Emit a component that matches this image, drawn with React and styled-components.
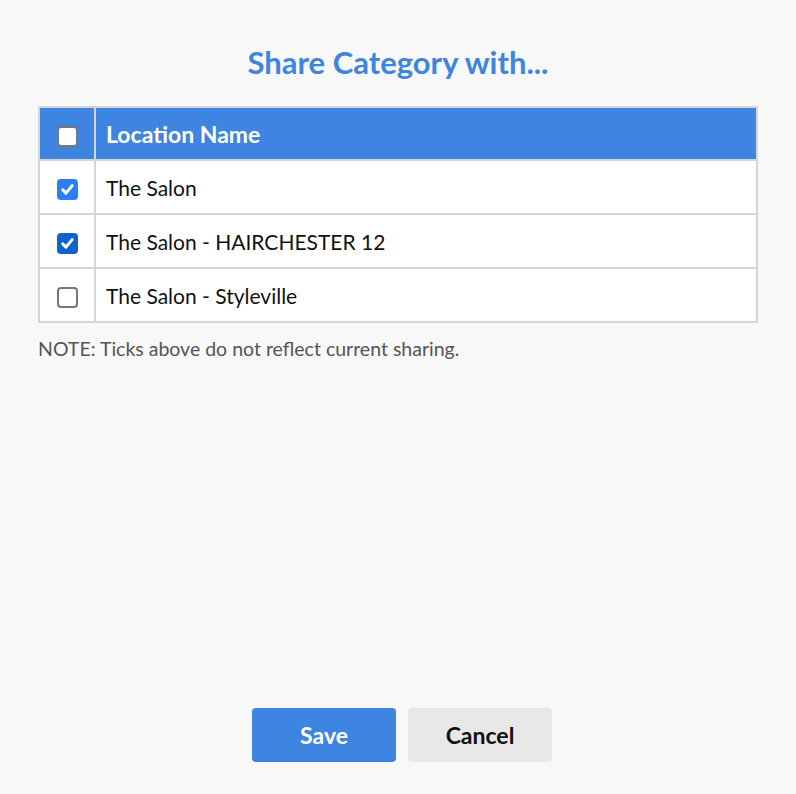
import React, { useState } from 'react';
import styled, { createGlobalStyle } from 'styled-components';

const Global = createGlobalStyle`
    html, body {
        margin: 0;
        padding: 0;
        background: #f8f8f8;
        font-family: Lato, "Open Sans", sans-serif;
    }
`;

const Page = styled.div`
    height: 794px;
    box-sizing: border-box;
    display: flex;
    flex-direction: column;
    padding: 40px 38px 32px;
`;

const Title = styled.h1`
    margin: 0 0 22px;
    text-align: center;
    font-size: 31px;
    font-weight: 700;
    color: #3d85e0;
    line-height: 44px;
`;

const Table = styled.table`
    width: 100%;
    border-collapse: collapse;
    border: 2px solid #d6d6d6;
    background: #fff;
`;

const Th = styled.th`
    background: #3d85e0;
    color: #fff;
    font-size: 23px;
    font-weight: 700;
    height: 51px;
    padding: 0 10px;
    border: 2px solid #d6d6d6;
    border-bottom-width: 1px;
    width: ${p => (p.narrow ? '34px' : 'auto')};
    text-align: ${p => (p.narrow ? 'center' : 'left')};
`;

const Td = styled.td`
    height: 52px;
    padding: 0 10px;
    font-size: 21px;
    color: #111;
    border: 2px solid #d6d6d6;
    width: ${p => (p.narrow ? '34px' : 'auto')};
    text-align: ${p => (p.narrow ? 'center' : 'left')};
`;

const Box = styled.span`
    display: inline-flex;
    align-items: center;
    justify-content: center;
    width: 21px;
    height: 21px;
    box-sizing: border-box;
    border-radius: 4px;
    vertical-align: middle;
    cursor: pointer;
    background: ${p => (p.checked ? p.tone : '#fff')};
    border: ${p => (p.checked ? 'none' : '2px solid #767676')};
`;

const Note = styled.p`
    margin: 14px 0 0;
    font-size: 19.5px;
    color: #555;
`;

const Spacer = styled.div`
    flex: 1;
`;

const Buttons = styled.div`
    display: flex;
    justify-content: center;
    gap: 12px;
    padding-left: 8px;
`;

const Button = styled.button`
    width: 144px;
    height: 54px;
    border: none;
    border-radius: 4px;
    font-family: Lato, "Open Sans", sans-serif;
    font-size: 23px;
    font-weight: 700;
    cursor: pointer;
    background: ${p => (p.primary ? '#3d85e0' : '#e8e8e8')};
    color: ${p => (p.primary ? '#fff' : '#111')};
`;

function Check({ checked, tone = '#2b7ff2', onClick }) {
    return (
        <Box checked={checked} tone={tone} onClick={onClick}>
            {checked && (
                <svg width="15" height="15" viewBox="0 0 14 14">
                    <path d="M2.6 7.4 L5.6 10.4 L11.4 3.4" fill="none" stroke="#fff" strokeWidth="2.8" strokeLinecap="round" strokeLinejoin="round" />
                </svg>
            )}
        </Box>
    );
}

const locations = [
    { name: 'The Salon', checked: true, tone: '#2b7ff2' },
    { name: 'The Salon - HAIRCHESTER 12', checked: true, tone: '#0f62d0' },
    { name: 'The Salon - Styleville', checked: false },
];

export default function App() {
    const [rows, setRows] = useState(locations);
    const toggle = i => setRows(rows.map((r, j) => (j === i ? { ...r, checked: !r.checked } : r)));

    return (
        <>
            <Global />
            <Page>
                <Title>Share Category with...</Title>
                <Table>
                    <thead>
                        <tr>
                            <Th narrow><Check checked={false} /></Th>
                            <Th>Location Name</Th>
                        </tr>
                    </thead>
                    <tbody>
                        {rows.map((r, i) => (
                            <tr key={r.name}>
                                <Td narrow><Check checked={r.checked} tone={r.tone} onClick={() => toggle(i)} /></Td>
                                <Td>{r.name}</Td>
                            </tr>
                        ))}
                    </tbody>
                </Table>
                <Note>NOTE: Ticks above do not reflect current sharing.</Note>
                <Spacer />
                <Buttons>
                    <Button primary>Save</Button>
                    <Button>Cancel</Button>
                </Buttons>
            </Page>
        </>
    );
}
